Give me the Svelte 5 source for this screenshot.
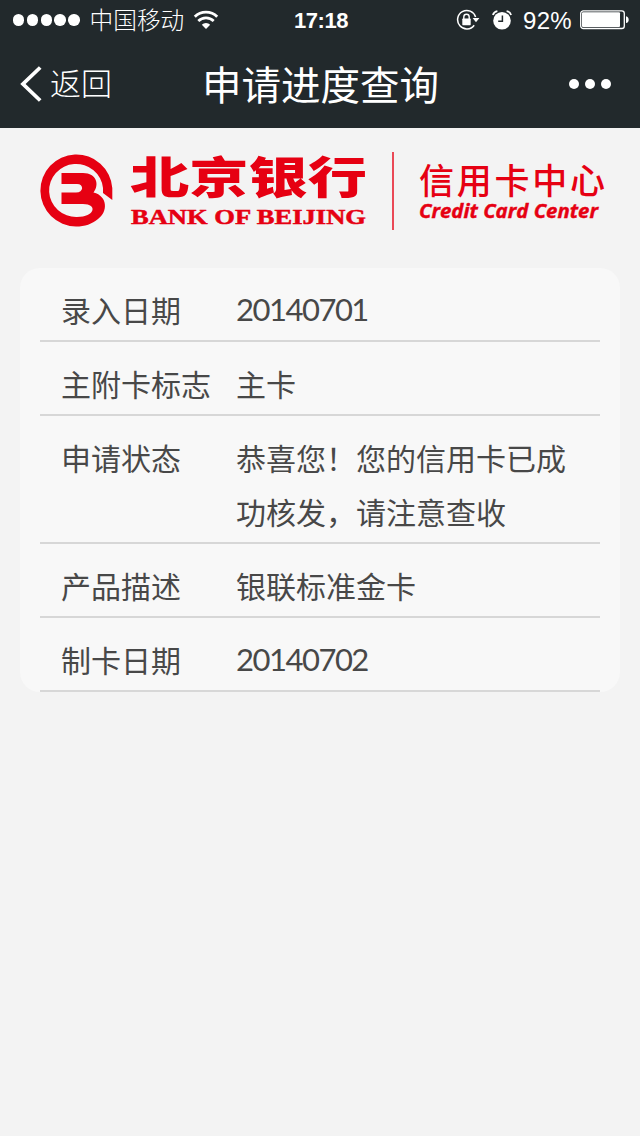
<script>
	const signalDots = [0, 1, 2, 3, 4];

	const rows = [
		{ label: '录入日期', value: '20140701', numeric: true },
		{ label: '主附卡标志', value: '主卡' },
		{ label: '申请状态', value: '恭喜您！您的信用卡已成功核发，请注意查收' },
		{ label: '产品描述', value: '银联标准金卡' },
		{ label: '制卡日期', value: '20140702', numeric: true }
	];
</script>

<div class="screen">
	<header>
		<div class="status-bar">
			<div class="status-left">
				<div class="signal">
					{#each signalDots as dot (dot)}
						<i></i>
					{/each}
				</div>
				<span class="carrier">中国移动</span>
				<svg class="wifi" width="26" height="20" viewBox="0 0 26 20" fill="none" stroke="#fff">
					<path d="M1.8 6.7a16 16 0 0 1 22.4 0" stroke-width="2.9" />
					<path d="M5.3 11a10.9 10.9 0 0 1 15.4 0" stroke-width="2.7" />
					<path d="M13 19l-4.2-4.2a5.9 5.9 0 0 1 8.4 0z" fill="#fff" stroke="none" />
				</svg>
			</div>
			<time>17:18</time>
			<div class="status-right">
				<svg class="lock" width="24" height="22" viewBox="0 0 24 22" fill="none" stroke="#fff">
					<path d="M19.6 8A9.2 9.2 0 1 0 18.2 16.2" stroke-width="1.5" />
					<path d="M16.6 9h6.8l-3.4 4.2z" fill="#fff" stroke="none" />
					<path d="M7.8 10V7.9a2.7 2.7 0 0 1 5.4 0V10" stroke-width="1.4" />
					<rect x="6.3" y="9.6" width="8.4" height="6.6" rx=".6" fill="#fff" stroke="none" />
				</svg>
				<svg class="alarm" width="20" height="20" viewBox="0 0 20 20" fill="none">
					<circle cx="10" cy="10.7" r="8.8" fill="#fff" />
					<path d="M.9 5A5.5 5.5 0 0 1 5.4 1.2M19.1 5A5.5 5.5 0 0 0 14.6 1.2" stroke="#fff" stroke-width="1.8" />
					<path d="M10.4 5.5v5.7H6.2" stroke="#22292c" stroke-width="1.5" />
				</svg>
				<span class="percent">92%</span>
				<svg class="battery" width="49" height="20" viewBox="0 0 49 20">
					<rect x=".7" y=".9" width="43.6" height="17.6" rx="2.6" fill="none" stroke="#fff" stroke-width="1.3" />
					<rect x="2" y="2.3" width="38" height="14.8" rx="1" fill="#fff" />
					<path d="M46 6.3c3.6.6 3.6 6.2 0 6.8z" fill="#fff" />
				</svg>
			</div>
		</div>

		<nav>
			<button class="back" type="button">
				<svg width="24" height="38" viewBox="0 0 24 38" fill="none" stroke="#fff" stroke-width="3.8">
					<path d="M21.2 2.5L4 19l17.2 16.5" />
				</svg>
				<span>返回</span>
			</button>
			<h1>申请进度查询</h1>
			<button class="more" type="button" aria-label="更多">
				<i></i><i></i><i></i>
			</button>
		</nav>
	</header>

	<svg class="logo" width="640" height="140" viewBox="0 128 640 140" fill="#e60012">
		<path
			d="M61.500 173H83C97 173 99.500 185 93.500 192.500C108 196 108 212 98 219C92 224 85 226.500 76 226.500A36 36 0 1 1 112.300 188V200L103 193V188A27 26.500 0 1 0 77 217C95 217 98 204 83 204H61.500V192.500H76C84 192.500 84 184 77 184H61.500Z"
		/>
		<text class="name" x="130" y="193.5" textLength="237" lengthAdjust="spacingAndGlyphs">北京银行</text>
		<text class="name-en" x="131" y="224" textLength="235" lengthAdjust="spacingAndGlyphs">BANK OF BEIJING</text>
		<rect x="392" y="152" width="2" height="78" opacity=".7" />
		<text class="center" x="419" y="193.500" textLength="186">信用卡中心</text>
		<text class="center-en" x="419" y="218" textLength="179" lengthAdjust="spacingAndGlyphs">Credit Card Center</text>
	</svg>

	<dl>
		{#each rows as row (row.label)}
			<div class="row">
				<dt>{row.label}</dt>
				<dd class:numeric={row.numeric}>{row.value}</dd>
			</div>
		{/each}
	</dl>
</div>

<style>
	:global(body) {
		background: #f3f3f3;
	}

	.screen {
		width: 640px;
		min-height: 1136px;
		background: #f3f3f3;
		font-family: 'Noto Sans CJK SC', sans-serif;
	}

	header {
		height: 128px;
		background: #22292c;
		color: #fff;
	}

	.status-bar {
		display: grid;
		grid-template-columns: 1fr auto 1fr;
		align-items: center;
		height: 40px;
		padding: 0 11px 0 13px;
	}

	.status-left,
	.status-right,
	.signal,
	.back,
	.more {
		display: flex;
		align-items: center;
	}

	.signal {
		gap: 2.4px;
	}

	.signal i {
		width: 11.4px;
		height: 11.4px;
		border-radius: 50%;
		background: #fff;
	}

	.carrier {
		margin: 0 9px 2px 10px;
		font-size: 23.7px;
		font-weight: 300;
		line-height: 38px;
	}

	time {
		padding-top: 2px;
		font: bold 22px/38px 'Liberation Sans', sans-serif;
		letter-spacing: -0.5px;
	}

	.status-right {
		justify-content: flex-end;
	}

	.alarm {
		margin: 0 11px 0 12px;
	}

	.percent {
		margin-right: 8px;
		padding-top: 2px;
		font: 24px/38px 'Liberation Sans', sans-serif;
		letter-spacing: 0.3px;
	}

	nav {
		display: grid;
		grid-template-columns: 1fr auto 1fr;
		align-items: center;
		height: 88px;
		padding: 0 29px 0 19px;
	}

	button {
		padding: 0;
		border: 0;
		background: none;
		color: inherit;
		font: inherit;
	}

	.back {
		gap: 7px;
		font-size: 31px;
		font-weight: 300;
		line-height: 44px;
	}

	.back span {
		padding-bottom: 4px;
	}

	h1 {
		margin: 0;
		padding: 0 0 3px 11px;
		font-size: 39.5px;
		font-weight: 400;
		line-height: 60px;
	}

	.more {
		justify-self: end;
		gap: 6px;
	}

	.more i {
		width: 10px;
		height: 10px;
		border-radius: 50%;
		background: #fff;
	}

	.logo {
		display: block;
	}

	.name {
		font-size: 44px;
		font-weight: 900;
	}

	.name-en {
		font: bold 22px 'Liberation Serif', serif;
		stroke: #e60012;
		stroke-width: 0.5px;
	}

	.center {
		font-size: 35px;
		font-weight: 500;
	}

	.center-en {
		font: italic bold 19px 'Open Sans', sans-serif;
		stroke: #e60012;
		stroke-width: 0.4px;
	}

	dl {
		margin: 0 20px;
		padding: 0 20px;
		border-radius: 20px;
		background: #f8f8f8;
		color: #484848;
		font-size: 30px;
		line-height: 54px;
	}

	.row {
		display: grid;
		grid-template-columns: 175px 350px;
		padding: 14px 0 4px 21px;
		border-bottom: 2px solid #d7d7d7;
	}

	dt,
	dd {
		margin: 0;
	}

	.numeric {
		font-family: Lato, sans-serif;
		font-size: 31px;
		letter-spacing: -1.5px;
	}
</style>
